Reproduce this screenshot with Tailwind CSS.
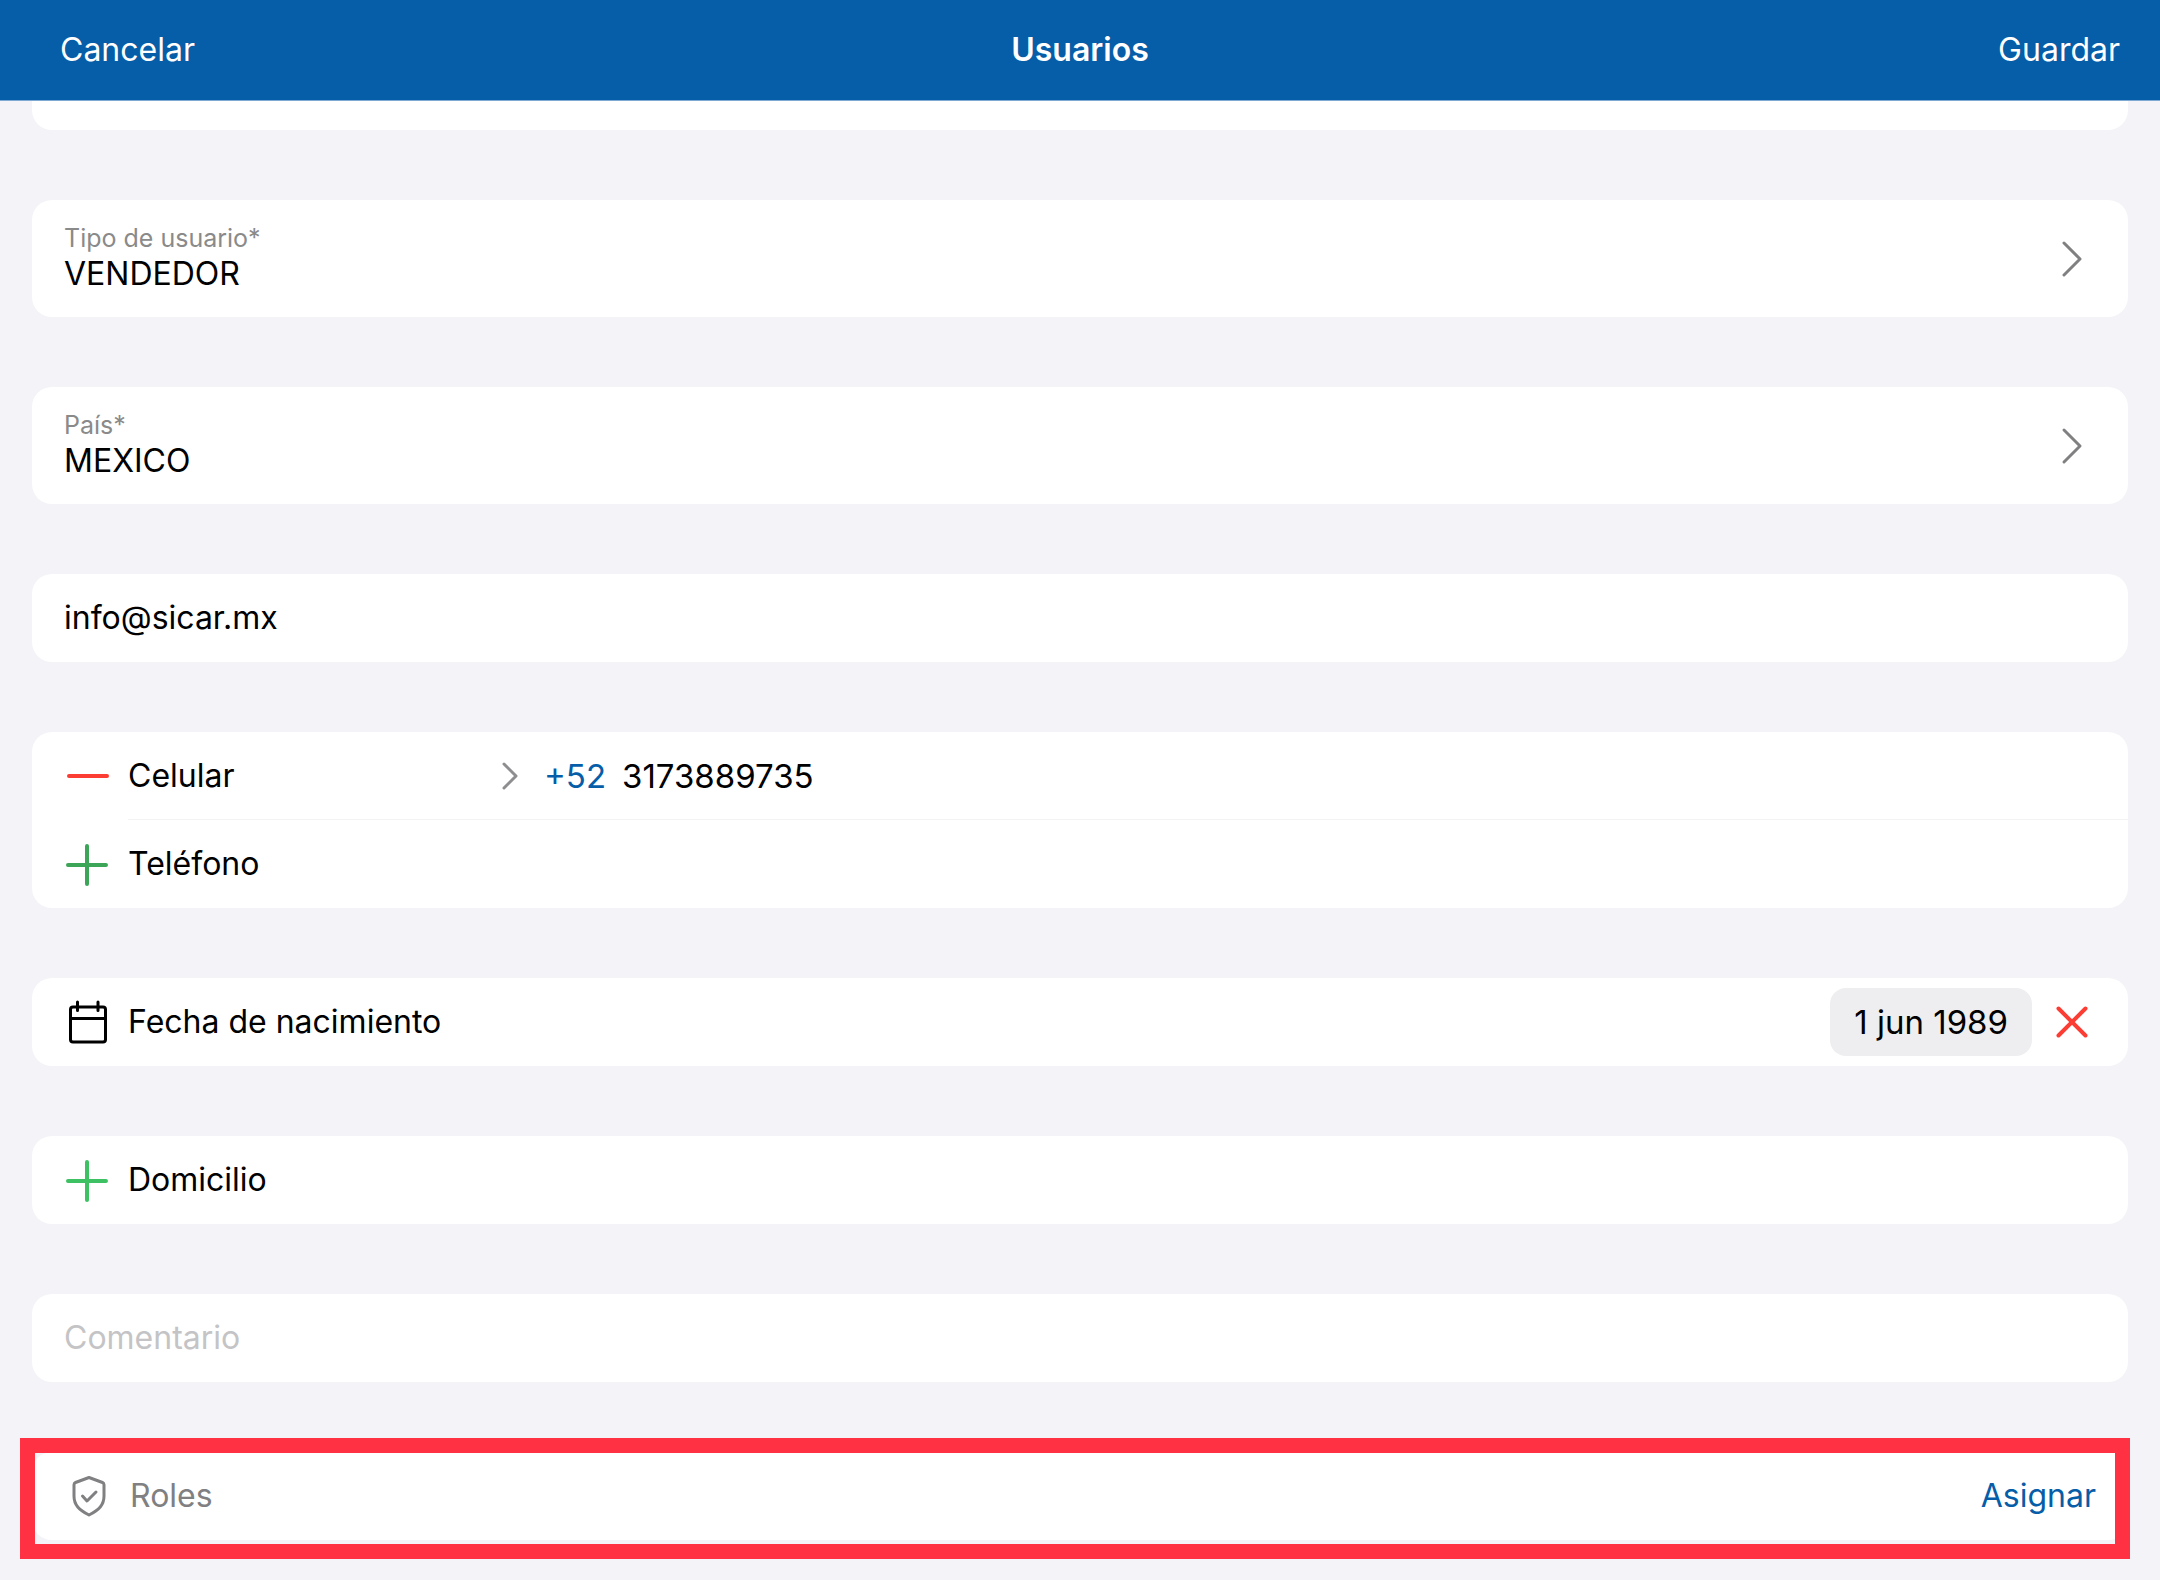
<!DOCTYPE html>
<html lang="es">
<head>
<meta charset="utf-8">
<meta name="viewport" content="width=device-width, initial-scale=1">
<title>Usuarios</title>
<script src="https://cdn.jsdelivr.net/npm/@tailwindcss/browser@4"></script>
</head>
<body class="min-h-screen bg-[#f3f3f8] font-['Inter','Roboto',sans-serif] text-[32px] leading-10 text-black">
  <header class="sticky top-0 z-10 grid h-[101px] grid-cols-[1fr_auto_1fr] items-center border-b border-[#7fa9d2] bg-[#065da8] px-10 text-white">
    <button type="button" class="justify-self-start pl-5">Cancelar</button>
    <h1 class="font-semibold">Usuarios</h1>
    <button type="button" class="justify-self-end">Guardar</button>
  </header>

  <main class="px-8 pb-10">
    <form class="flex flex-col gap-[70px]">
      <div class="h-[29px] rounded-b-[20px] bg-white"></div>

      <button type="button" class="flex items-center justify-between rounded-[20px] bg-white px-8 pt-[22px] pb-[23px] text-left">
        <span class="flex flex-col">
          <span class="text-[25px] leading-8 text-[#8a8a8a]">Tipo de usuario*</span>
          <span>VENDEDOR</span>
        </span>
        <svg class="size-12" viewBox="0 0 48 48" fill="none" stroke="#808082" stroke-width="3" stroke-linecap="round" stroke-linejoin="round" aria-hidden="true"><path d="M16 9l16 16-16 16"/></svg>
      </button>

      <button type="button" class="flex items-center justify-between rounded-[20px] bg-white px-8 pt-[22px] pb-[23px] text-left">
        <span class="flex flex-col">
          <span class="text-[25px] leading-8 text-[#8a8a8a]">País*</span>
          <span>MEXICO</span>
        </span>
        <svg class="size-12" viewBox="0 0 48 48" fill="none" stroke="#808082" stroke-width="3" stroke-linecap="round" stroke-linejoin="round" aria-hidden="true"><path d="M16 9l16 16-16 16"/></svg>
      </button>

      <div class="flex h-22 items-center rounded-[20px] bg-white px-8">
        <input type="email" aria-label="Correo electrónico" value="info@sicar.mx" class="w-full bg-transparent outline-none">
      </div>

      <div class="rounded-[20px] bg-white pl-8">
        <div class="flex h-22 items-center gap-4">
          <button type="button" aria-label="Quitar celular">
            <svg class="size-12" viewBox="0 0 48 48" fill="none" stroke="#fb3d33" stroke-width="4" stroke-linecap="round" aria-hidden="true"><path d="M5 24h38"/></svg>
          </button>
          <div class="flex h-full grow items-center gap-6 border-b border-[#f3f3f6] pr-8">
            <button type="button" class="flex w-[392px] items-center justify-between">
              <span>Celular</span>
              <svg class="size-8" viewBox="0 0 32 32" fill="none" stroke="#8e8e90" stroke-width="3" stroke-linecap="round" stroke-linejoin="round" aria-hidden="true"><path d="M16 4l12 12-12 12"/></svg>
            </button>
            <div class="flex grow items-center gap-4 text-[33px]">
              <button type="button" class="text-[#065da8]">+52</button>
              <input type="tel" aria-label="Número de celular" value="3173889735" class="min-w-0 grow bg-transparent outline-none">
            </div>
          </div>
        </div>
        <button type="button" class="flex h-22 w-full items-center gap-4">
          <svg class="size-12" viewBox="0 0 48 48" fill="none" stroke="#3ca558" stroke-width="4" stroke-linecap="round" aria-hidden="true"><path d="M4 25h38M23 6v38"/></svg>
          <span>Teléfono</span>
        </button>
      </div>

      <div class="flex h-22 items-center gap-4 rounded-[20px] bg-white px-8">
        <svg class="size-12" viewBox="0 0 48 48" fill="none" stroke="#000" stroke-width="3" stroke-linecap="round" stroke-linejoin="round" aria-hidden="true"><rect x="6.500" y="9" width="35" height="35" rx="2.500"/><path d="M6.500 20.500h35M13.500 4v8.500M34 4v8.500"/></svg>
        <span id="fecha" class="grow">Fecha de nacimiento</span>
        <button type="button" aria-describedby="fecha" class="h-17 rounded-2xl bg-[#eeeef0] px-6 text-[33px]">1 jun 1989</button>
        <button type="button" aria-label="Borrar fecha">
          <svg class="size-12" viewBox="0 0 48 48" fill="none" stroke="#fb3d33" stroke-width="4" stroke-linecap="round" aria-hidden="true"><path d="M10.500 10.500l27 27M37.500 10.500l-27 27"/></svg>
        </button>
      </div>

      <button type="button" class="flex h-22 items-center gap-4 rounded-[20px] bg-white px-8">
        <svg class="size-12" viewBox="0 0 48 48" fill="none" stroke="#3dc162" stroke-width="4" stroke-linecap="round" aria-hidden="true"><path d="M4 25h38M23 6v38"/></svg>
        <span>Domicilio</span>
      </button>

      <div class="flex h-22 items-center rounded-[20px] bg-white px-8">
        <input type="text" aria-label="Comentario" placeholder="Comentario" class="w-full bg-transparent outline-none placeholder:text-[#c4c4c6]">
      </div>

      <div class="relative flex h-22 items-center gap-[18px] rounded-[20px] bg-white px-8">
        <svg class="size-12" viewBox="0 0 48 48" fill="none" stroke="#808082" stroke-width="3" stroke-linecap="round" stroke-linejoin="round" aria-hidden="true"><path d="M25 5.500l13.500 5c1.200.5 1.500 1 1.500 2.200V24c0 9-5 14-15 19-10-5-15-10-15-19V12.700c0-1.200.3-1.700 1.500-2.200z"/><path d="M18.500 24l4.500 5 9-9"/></svg>
        <span class="grow text-[#808082]">Roles</span>
        <button type="button" class="text-[#065da8]">Asignar</button>
        <div class="pointer-events-none absolute -top-3.5 -right-0.5 -bottom-[19px] -left-3 border-[15px] border-[#ff3142]"></div>
      </div>
    </form>
  </main>
</body>
</html>
